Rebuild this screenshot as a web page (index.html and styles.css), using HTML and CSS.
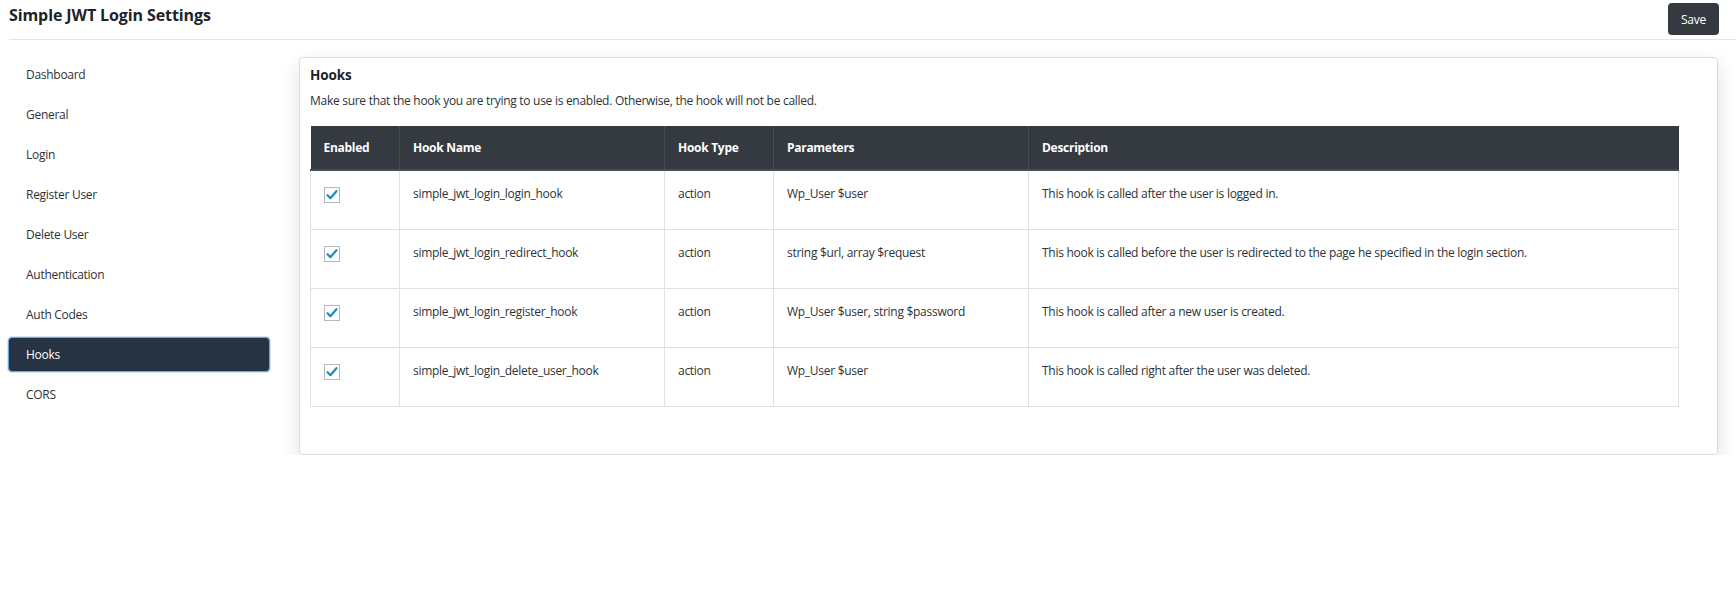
FILE: index.html
```html
<!DOCTYPE html>
<html>
<head>
<meta charset="utf-8">
<link rel="stylesheet" href="styles.css">
</head>
<body>
<div class="app">
  <header class="topbar">
    <h1 class="title">Simple JWT Login Settings</h1>
    <button class="save-btn">Save</button>
  </header>
  <div class="main">
    <nav class="sidenav">
      <a class="nav-item">Dashboard</a>
      <a class="nav-item">General</a>
      <a class="nav-item">Login</a>
      <a class="nav-item">Register User</a>
      <a class="nav-item">Delete User</a>
      <a class="nav-item">Authentication</a>
      <a class="nav-item">Auth Codes</a>
      <a class="nav-item active">Hooks</a>
      <a class="nav-item">CORS</a>
    </nav>
    <section class="card">
      <h2 class="card-title">Hooks</h2>
      <p class="card-desc">Make sure that the hook you are trying to use is enabled. Otherwise, the hook will not be called.</p>
      <table class="hooks">
        <colgroup>
          <col class="c1"><col class="c2"><col class="c3"><col class="c4"><col class="c5">
        </colgroup>
        <thead>
          <tr><th>Enabled</th><th>Hook Name</th><th>Hook Type</th><th>Parameters</th><th>Description</th></tr>
        </thead>
        <tbody>
          <tr>
            <td><span class="cb"><svg viewBox="0 0 16 16" width="16" height="16"><path d="M3.6 8.2 L6.4 11.2 L12.4 4.2" fill="none" stroke="#1e8cbe" stroke-width="2.2" stroke-linecap="round" stroke-linejoin="round"/></svg></span></td>
            <td>simple_jwt_login_login_hook</td><td>action</td><td>Wp_User $user</td><td>This hook is called after the user is logged in.</td>
          </tr>
          <tr>
            <td><span class="cb"><svg viewBox="0 0 16 16" width="16" height="16"><path d="M3.6 8.2 L6.4 11.2 L12.4 4.2" fill="none" stroke="#1e8cbe" stroke-width="2.2" stroke-linecap="round" stroke-linejoin="round"/></svg></span></td>
            <td>simple_jwt_login_redirect_hook</td><td>action</td><td>string $url, array $request</td><td>This hook is called before the user is redirected to the page he specified in the login section.</td>
          </tr>
          <tr>
            <td><span class="cb"><svg viewBox="0 0 16 16" width="16" height="16"><path d="M3.6 8.2 L6.4 11.2 L12.4 4.2" fill="none" stroke="#1e8cbe" stroke-width="2.2" stroke-linecap="round" stroke-linejoin="round"/></svg></span></td>
            <td>simple_jwt_login_register_hook</td><td>action</td><td>Wp_User $user, string $password</td><td>This hook is called after a new user is created.</td>
          </tr>
          <tr>
            <td><span class="cb"><svg viewBox="0 0 16 16" width="16" height="16"><path d="M3.6 8.2 L6.4 11.2 L12.4 4.2" fill="none" stroke="#1e8cbe" stroke-width="2.2" stroke-linecap="round" stroke-linejoin="round"/></svg></span></td>
            <td>simple_jwt_login_delete_user_hook</td><td>action</td><td>Wp_User $user</td><td>This hook is called right after the user was deleted.</td>
          </tr>
        </tbody>
      </table>
    </section>
  </div>
</div>
</body>
</html>
```
FILE: styles.css
```css
* { box-sizing: border-box; }
html, body { margin: 0; padding: 0; background: #fff; }
body {
  font-family: "Open Sans", "Noto Sans", sans-serif;
  color: #212529;
  font-size: 12px;
  letter-spacing: -0.28px;
}
.app { padding-left: 9px; }
.topbar {
  display: flex;
  align-items: center;
  justify-content: space-between;
  height: 40px;
  padding: 3px 17px 4px 0;
  border-bottom: 1px solid #e2e4e7;
}
.title {
  margin: 0;
  align-self: flex-start;
  font-size: 16px;
  font-weight: 700;
  color: #1d2327;
  line-height: 24px;
  letter-spacing: -0.1px;
}
.save-btn {
  width: 51px;
  height: 32px;
  border: none;
  border-radius: 4px;
  background: #343a40;
  color: #fff;
  font-family: inherit;
  font-size: 12px;
  letter-spacing: -0.2px;
  padding: 0;
}
.main {
  display: flex;
  align-items: flex-start;
  padding-top: 17px;
}
.sidenav {
  width: 262px;
  flex: none;
  display: flex;
  flex-direction: column;
  gap: 5px;
  margin-left: -1px;
  margin-right: 29px;
}
.nav-item {
  display: flex;
  align-items: center;
  height: 35px;
  padding-left: 17px;
  border-radius: 4px;
  color: #2c3338;
  font-size: 12px;
  border: 1px solid transparent;
}
.nav-item.active {
  background: #253342;
  color: #fff;
  border-color: #6aa8e0;
  box-shadow: 0 0 0 1px rgba(120, 180, 235, 0.35);
}
.card {
  width: 1419px;
  height: 398px;
  border: 1px solid #dcdcdc;
  border-radius: 4px;
  background: #fff;
  box-shadow: 0 8px 20px rgba(0, 0, 0, 0.13);
  padding: 6px 39px 0 10px;
}
.card-title {
  margin: 0;
  font-size: 13.5px;
  font-weight: 700;
  line-height: 22px;
  color: #1d2327;
  letter-spacing: -0.1px;
}
.card-desc {
  margin: 6px 0 0;
  font-size: 12px;
  line-height: 18px;
  color: #2c3338;
}
.hooks {
  margin-top: 16px;
  width: 1368px;
  border-collapse: collapse;
  table-layout: fixed;
  font-size: 12px;
}
.c1 { width: 89px; }
.c2 { width: 265px; }
.c3 { width: 109px; }
.c4 { width: 255px; }
.c5 { width: 650px; }
.hooks th {
  background: #343a40;
  color: #fff;
  font-weight: 700;
  text-align: left;
  height: 44px;
  padding: 0 13px;
  border-left: 1px solid #454d55;
  border-bottom: 2px solid #454d55;
}
.hooks th:first-child { border-left: none; }
.hooks td {
  height: 59px;
  vertical-align: top;
  padding: 13px 13px 0;
  line-height: 20px;
  border: 1px solid #dee2e6;
  color: #2c3338;
}
.cb {
  display: block;
  width: 16px;
  height: 16px;
  margin-top: 3px;
  border: 1px solid #b4b9be;
  background: #fff;
  position: relative;
}
.cb svg { position: absolute; left: -1px; top: -1px; }
```
